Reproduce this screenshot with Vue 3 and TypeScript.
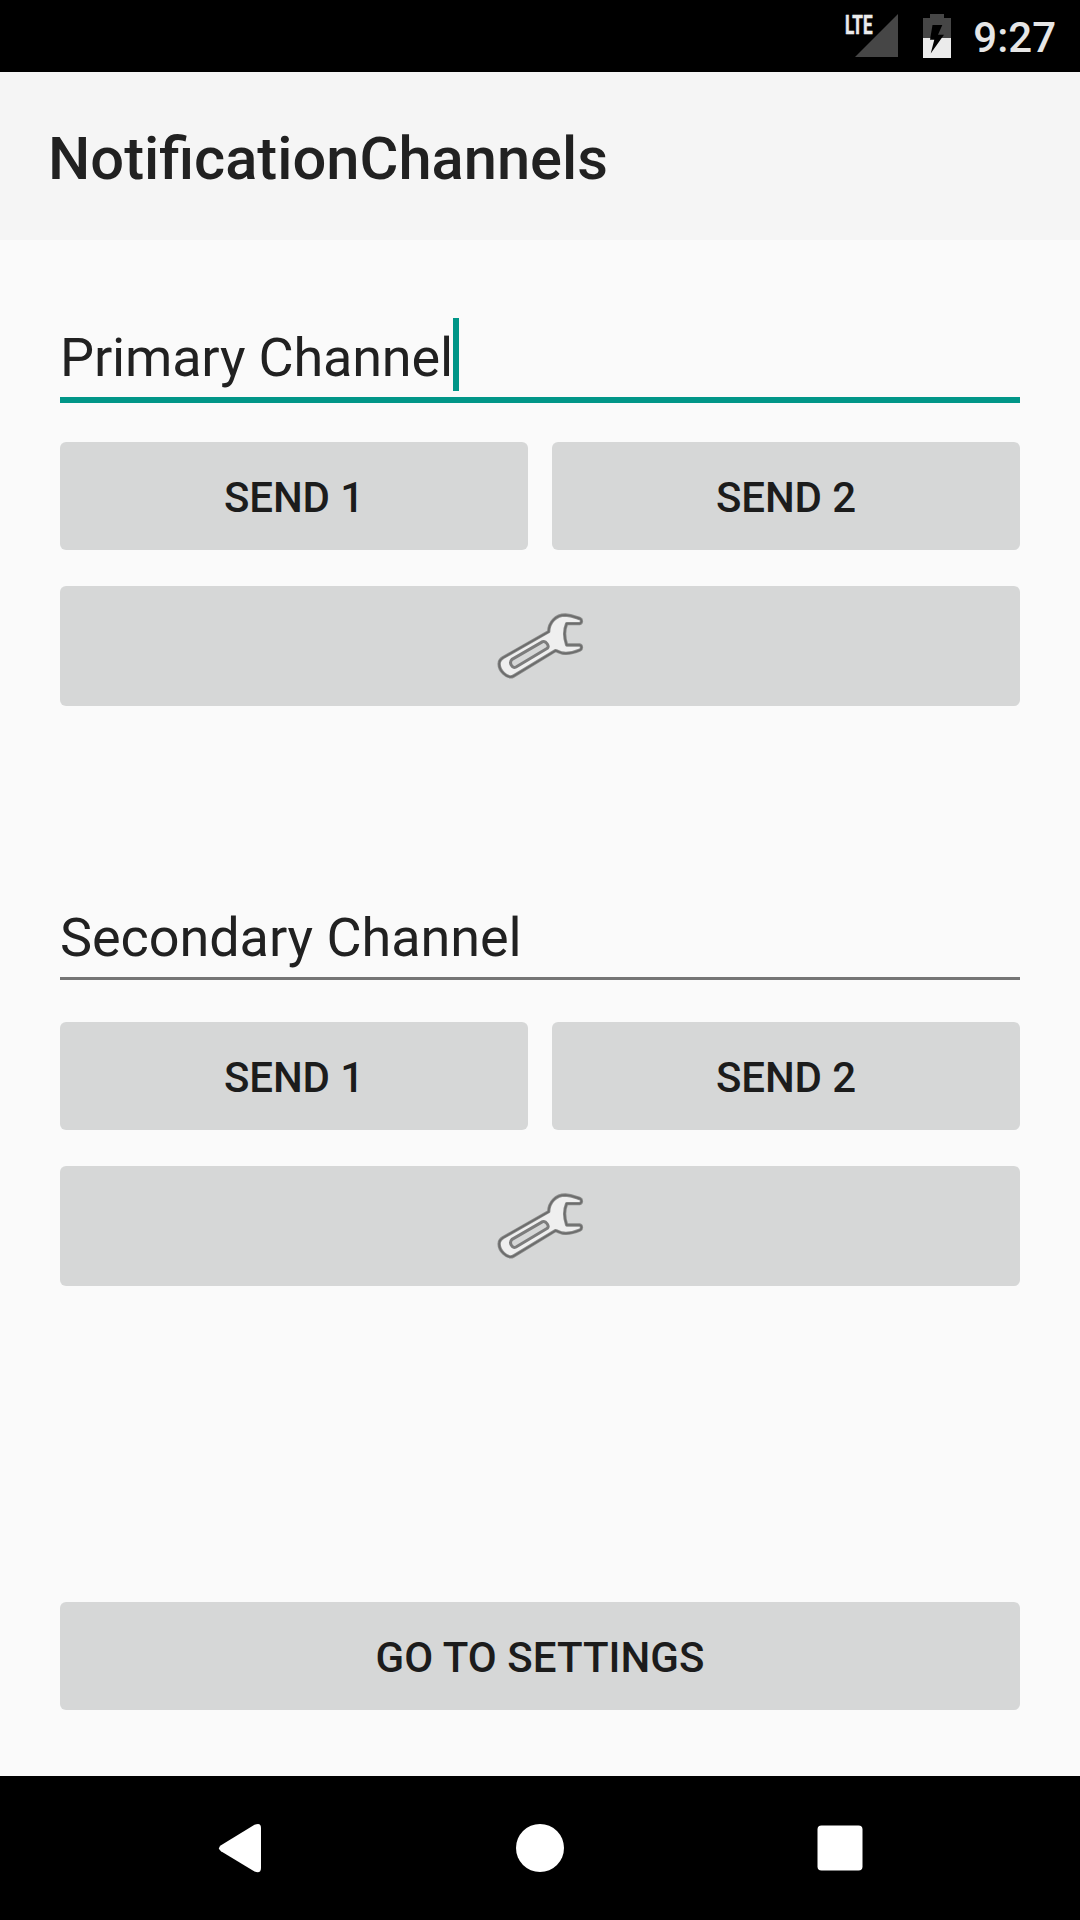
<script setup lang="ts">
interface Channel {
  id: string
  name: string
  focused: boolean
}

const channels: Channel[] = [
  { id: 'primary', name: 'Primary Channel', focused: true },
  { id: 'secondary', name: 'Secondary Channel', focused: false },
]

const wrench =
  'M206 125C207 97 227 75 256 75C275 76 287 82 300 86C306 88 306 100 299 101H260C251 122 252 142 260 165H299C306 166 306 178 300 180C284 187 264 192 246 189C238 187 231 182 226 182L101 258C82 269 54 240 58 217C59 210 63 207 69 203Z'
</script>

<template>
  <div class="screen">
    <header class="status-bar">
      <svg class="signal" width="54" height="58" viewBox="0 -14 54 58">
        <path d="M53 0V43H10Z" fill="#464646" />
        <text x="0" y="19.5" textLength="27.5" lengthAdjust="spacingAndGlyphs">LTE</text>
      </svg>
      <svg class="battery" width="28" height="44" viewBox="0 0 28 44">
        <path d="M7 0H21V4H28V24H0V4H7Z" fill="#464646" />
        <path d="M0 24H28V44H0Z" fill="#ebebeb" />
        <path d="M9.5 11H19.3L15 20.7H21L7.7 39.5L11.3 25.7H7Z" fill="#000" />
      </svg>
      <span class="clock">9:27</span>
    </header>

    <div class="app-bar">
      <h1>NotificationChannels</h1>
    </div>

    <main class="content">
      <section v-for="channel in channels" :key="channel.id" class="channel">
        <div class="field" :class="{ focused: channel.focused }">
          <span>{{ channel.name }}</span>
          <i v-if="channel.focused" class="caret"></i>
        </div>
        <div class="row">
          <button class="btn">SEND 1</button>
          <button class="btn">SEND 2</button>
        </div>
        <button class="btn tool" aria-label="Channel settings">
          <svg width="120" height="112" viewBox="0 0 360 336">
            <g stroke-linejoin="round">
              <path :d="wrench" fill="#efefef" stroke="#8b8c8b" stroke-width="10" />
              <path :d="wrench" fill="none" stroke="#6c6c6c" stroke-width="5" />
              <path
                d="M96 208L188 155C198 151 209 169 202 175L108 231C96 237 86 218 96 208Z"
                fill="#d6d7d7"
                stroke="#7c7c7c"
                stroke-width="9"
              />
            </g>
          </svg>
        </button>
      </section>
      <button class="btn settings">GO TO SETTINGS</button>
    </main>

    <nav class="nav-bar">
      <svg width="1080" height="144" viewBox="0 0 1080 144" fill="#fff">
        <path d="M221 69.3L254.5 48.8Q261 46 261 52V92Q261 98 254.5 95.6L221 75.3Q217 72.3 221 69.3Z" />
        <circle cx="540" cy="72" r="24" />
        <rect x="817.5" y="49.5" width="45" height="45" rx="4" />
      </svg>
    </nav>
  </div>
</template>

<style>
body {
  margin: 0;
}
</style>

<style scoped>
.screen {
  display: flex;
  flex-direction: column;
  width: 1080px;
  height: 1920px;
  overflow: hidden;
  background: #fafafa;
  color: #212121;
  font-family: Roboto, sans-serif;
}
.status-bar {
  box-sizing: border-box;
  display: flex;
  flex: none;
  height: 72px;
  padding-right: 24px;
  justify-content: flex-end;
  background: #000;
}
.signal {
  overflow: visible;
}
.signal text {
  font: 700 26px Roboto, sans-serif;
  fill: #ebebeb;
  stroke: #ebebeb;
  stroke-width: 0.6px;
}
.battery {
  margin: 14px 0 0 24px;
}
.clock {
  margin: 15px 0 0 22px;
  color: #e6e6e6;
  font-size: 42px;
  font-weight: 500;
  line-height: 46px;
}
.app-bar {
  box-sizing: border-box;
  display: flex;
  flex: none;
  align-items: center;
  height: 168px;
  padding: 5px 48px 0;
  background: #f5f5f5;
}
h1 {
  margin: 0;
  font-size: 59.65px;
  font-weight: 500;
  line-height: 72px;
}
.content {
  display: flex;
  flex: 1;
  flex-direction: column;
  padding: 78px 60px 66px;
}
.channel {
  display: flex;
  flex: none;
  flex-direction: column;
  height: 580px;
}
.field {
  box-sizing: border-box;
  display: flex;
  height: 85px;
  margin-bottom: 39px;
  border-bottom: 6px solid #009688;
  font-size: 54px;
  letter-spacing: -0.18px;
  line-height: 79px;
  white-space: nowrap;
}
.field:not(.focused) {
  height: 82px;
  margin-bottom: 42px;
  border-bottom: 3px solid #757575;
  letter-spacing: -0.07px;
}
.caret {
  width: 6px;
  height: 73px;
  background: #009688;
}
.row {
  display: flex;
  gap: 24px;
  margin-bottom: 36px;
}
.btn {
  flex: 1;
  height: 108px;
  padding: 4px 0 0;
  border: 0;
  border-radius: 6px;
  background: #d6d7d7;
  color: #1c1c1c;
  font: 500 42px/50px Roboto, sans-serif;
  letter-spacing: -0.1px;
}
.tool {
  display: flex;
  flex: none;
  align-items: center;
  justify-content: center;
  height: 120px;
  padding: 0;
}
.settings {
  flex: none;
  margin-top: auto;
  letter-spacing: 0.06px;
}
.nav-bar {
  flex: none;
  height: 144px;
  background: #000;
}
.nav-bar svg {
  display: block;
}
</style>
